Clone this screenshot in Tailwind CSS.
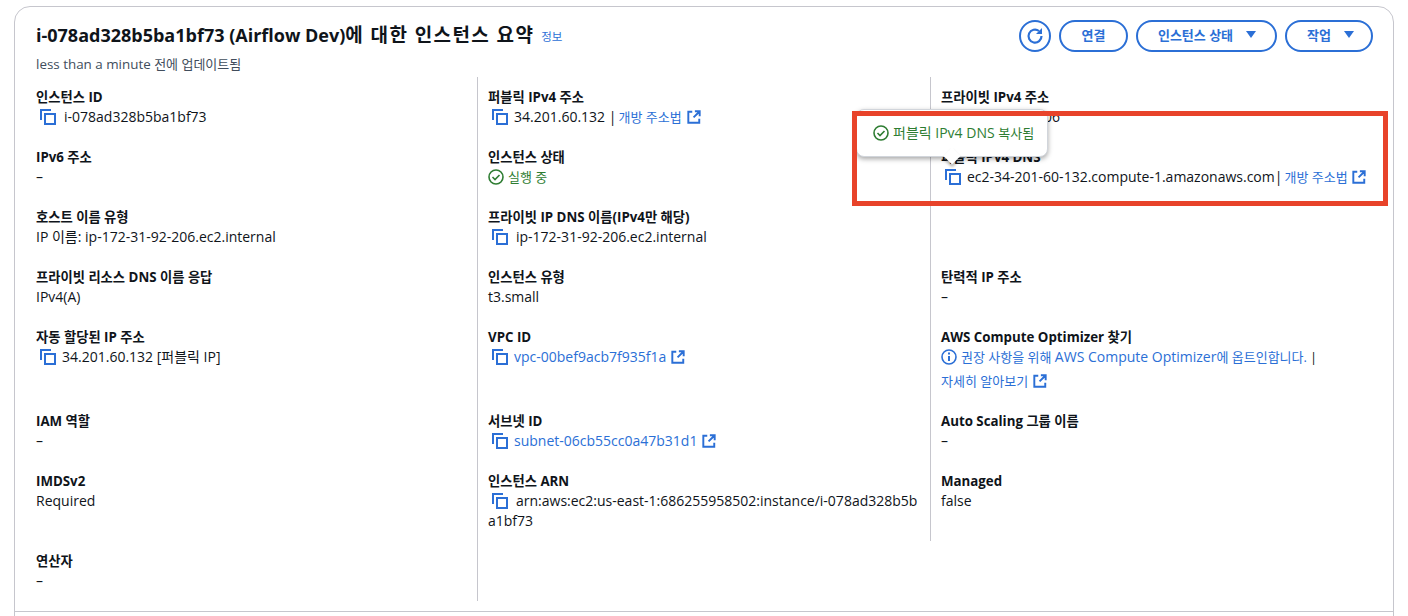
<!doctype html>
<html>
<head>
<meta charset="utf-8">
<script src="https://cdn.jsdelivr.net/npm/@tailwindcss/browser@4"></script>
</head>
<body class="bg-white overflow-hidden font-['Open_Sans','Noto_Sans_CJK_KR',sans-serif] text-[14px] leading-5 text-[#0f141a]">
<svg class="hidden"><defs>
<symbol id="copy" viewBox="0 0 16 16"><path d="M1 11V1h10" fill="none" stroke="currentColor" stroke-width="2"/><rect x="5" y="5" width="10" height="10" fill="none" stroke="currentColor" stroke-width="2"/></symbol>
<symbol id="ext" viewBox="0 0 16 16"><path d="M6 2H1.500v12.500H14V10M9 1.500h5.500V7M14 2L7.500 8.500" fill="none" stroke="currentColor" stroke-width="2.200"/></symbol>
<symbol id="ok" viewBox="0 0 16 16"><circle cx="8" cy="8" r="7" fill="none" stroke="currentColor" stroke-width="1.600"/><path d="M4.500 8l2.500 2.500L11.500 6" fill="none" stroke="currentColor" stroke-width="1.600"/></symbol>
</defs></svg>
<div class="relative h-[616px] pt-[6px] pl-[14px] pr-[14px]">
  <div class="h-[640px] border border-[#c6c6cd] rounded-2xl">
    <div class="flex justify-between pl-[21px] pr-[20px] pt-[13px] h-[70px]">
      <div>
        <div class="flex items-center gap-[7px] h-[30px]">
          <h1 class="text-[18px] leading-[30px] font-bold">i-078ad328b5ba1bf73 (Airflow Dev)<span class="text-[19px] tracking-[1.4px]">에 대한 인스턴스 요약</span></h1>
          <a class="text-[11.500px] text-[#2b6fd6] mt-[3px]">정보</a>
        </div>
        <p class="text-[13.4px] leading-5 mt-[4px] text-[#414d5c]">less than a minute <span class="text-[13px]">전에 업데이트됨</span></p>
      </div>
      <div class="flex gap-2 items-start text-[#2b6fd6] font-bold text-[13px]">
        <button class="size-8 rounded-full border-2 border-[#2b6fd6] flex items-center justify-center"><svg class="size-5" viewBox="0 0 20 20" fill="none" stroke="currentColor" stroke-width="2.200"><path d="M16.500 10a6.500 6.500 0 1 1-2.500-5"/><path d="M17 2v6h-6z" fill="currentColor" stroke="none"/></svg></button>
        <button class="h-8 w-[69px] rounded-full border-2 border-[#2b6fd6] pb-0.5">연결</button>
        <button class="h-8 w-[141px] rounded-full border-2 border-[#2b6fd6] flex items-center justify-center gap-3 pb-0.5 pl-0.5">인스턴스 상태 <svg class="w-3 h-2" viewBox="0 0 12 8"><path d="M1 0h10L6 7z" fill="currentColor"/></svg></button>
        <button class="h-8 w-[88px] rounded-full border-2 border-[#2b6fd6] flex items-center justify-center gap-3 pb-0.5 pl-1">작업 <svg class="w-3 h-2" viewBox="0 0 12 8"><path d="M1 0h10L6 7z" fill="currentColor"/></svg></button>
      </div>
    </div>
    <div class="flex pl-[21px]">
      <div class="w-[441px] pt-[10px] h-[524px] flex flex-col">
        <div class="h-[60px]"><b class="block text-[13.3px]">인스턴스 ID</b><div class="flex items-center pl-1"><svg class="size-4 text-[#2b6fd6] mr-2"><use href="#copy"/></svg>i-078ad328b5ba1bf73</div></div>
        <div class="h-[60px]"><b class="block text-[13.3px]">IPv6 주소</b><div>–</div></div>
        <div class="h-[60px]"><b class="block text-[13.3px]">호스트 이름 유형</b><div>IP 이름: ip-172-31-92-206.ec2.internal</div></div>
        <div class="h-[60px]"><b class="block text-[13.3px]">프라이빗 리소스 DNS 이름 응답</b><div>IPv4(A)</div></div>
        <div class="h-[84px]"><b class="block text-[13.3px]">자동 할당된 IP 주소</b><div class="flex items-center pl-1"><svg class="size-4 text-[#2b6fd6] mr-[6px]"><use href="#copy"/></svg><span>34.201.60.132 [퍼블릭 IP]</span></div></div>
        <div class="h-[60px]"><b class="block text-[13.3px]">IAM 역할</b><div>–</div></div>
        <div class="h-[80px]"><b class="block text-[13.3px]">IMDSv2</b><div>Required</div></div>
        <div class="h-[40px]"><b class="block text-[13.3px]">연산자</b><div>–</div></div>
      </div>
      <div class="w-[453px] h-[524px] border-l border-[#c6c6cd] pl-[10px] pt-[10px] flex flex-col">
        <div class="h-[60px]"><b class="block text-[13.3px]">퍼블릭 IPv4 주소</b><div class="flex items-center pl-1"><svg class="size-4 text-[#2b6fd6] mr-[6px]"><use href="#copy"/></svg>34.201.60.132 |<a class="text-[#2b6fd6] text-[13px] ml-[2px]">개방 주소법</a><svg class="size-[14px] ml-[5px] text-[#2b6fd6]"><use href="#ext"/></svg></div></div>
        <div class="h-[60px]"><b class="block text-[13.3px]">인스턴스 상태</b><div class="flex items-center text-[#2e7d32] text-[13px]"><svg class="size-4 mr-1"><use href="#ok"/></svg>실행 중</div></div>
        <div class="h-[60px]"><b class="block text-[13.3px]">프라이빗 IP DNS 이름(IPv4만 해당)</b><div class="flex items-center pl-1"><svg class="size-4 text-[#2b6fd6] mr-2"><use href="#copy"/></svg>ip-172-31-92-206.ec2.internal</div></div>
        <div class="h-[60px]"><b class="block text-[13.3px]">인스턴스 유형</b><div>t3.small</div></div>
        <div class="h-[84px]"><b class="block text-[13.3px]">VPC ID</b><div class="flex items-center pl-1 text-[#2b6fd6]"><svg class="size-4 mr-[6px]"><use href="#copy"/></svg>vpc-00bef9acb7f935f1a<svg class="size-[14px] ml-[5px]"><use href="#ext"/></svg></div></div>
        <div class="h-[60px]"><b class="block text-[13.3px]">서브넷 ID</b><div class="flex items-center pl-1 text-[#2b6fd6]"><svg class="size-4 mr-[6px]"><use href="#copy"/></svg>subnet-06cb55cc0a47b31d1<svg class="size-[14px] ml-[5px]"><use href="#ext"/></svg></div></div>
        <div class="h-[60px] w-[431px]"><b class="block text-[13.3px]">인스턴스 ARN</b><div class="break-all"><svg class="inline-block size-4 text-[#2b6fd6] ml-1 mr-[8px] align-[-3px]"><use href="#copy"/></svg>arn:aws:ec2:us-east-1:686255958502:instance/i-078ad328b5ba1bf73</div></div>
      </div>
      <div class="w-[453px] h-[464px] border-l border-[#c6c6cd] pl-[10px] pt-[10px] flex flex-col">
        <div class="h-[60px]"><b class="block text-[13.3px]">프라이빗 IPv4 주소</b><div class="flex items-center pl-1"><svg class="size-4 text-[#2b6fd6] mr-2"><use href="#copy"/></svg>172.31.92.206</div></div>
        <div class="h-[60px]"><b class="block text-[13.3px]">퍼블릭 IPv4 DNS</b><div class="flex items-center pl-1 whitespace-nowrap"><svg class="size-4 text-[#2b6fd6] mr-[6px]"><use href="#copy"/></svg>ec2-34-201-60-132.compute-1.amazonaws.com|<a class="text-[#2b6fd6] text-[13px] ml-[2px]">개방 주소법</a><svg class="size-[14px] ml-[4px] text-[#2b6fd6]"><use href="#ext"/></svg></div></div>
        <div class="h-[60px]"></div>
        <div class="h-[60px]"><b class="block text-[13.3px]">탄력적 IP 주소</b><div>–</div></div>
        <div class="h-[84px]"><b class="block text-[13.3px]">AWS Compute Optimizer 찾기</b><div class="flex items-center text-[#2b6fd6] text-[13px]"><svg class="size-4 mr-1" viewBox="0 0 16 16"><circle cx="8" cy="8" r="7" fill="none" stroke="currentColor" stroke-width="1.600"/><path d="M8 7v5M8 3.500v2" stroke="currentColor" stroke-width="2" fill="none"/></svg><span>권장 사항을 위해 <span class="text-[14px]">AWS Compute Optimizer</span>에 옵트인합니다.</span><span class="text-[#0f141a] ml-[3px]">|</span></div><div class="flex items-center text-[#2b6fd6] text-[13px] mt-1">자세히 알아보기<svg class="size-[14px] ml-[5px]"><use href="#ext"/></svg></div></div>
        <div class="h-[60px]"><b class="block text-[13.3px]">Auto Scaling 그룹 이름</b><div>–</div></div>
        <div class="h-[60px]"><b class="block text-[13.3px]">Managed</b><div>false</div></div>
      </div>
    </div>
    <div class="border-t border-[#c6c6cd] mt-[10px]"></div>
  </div>
  <div class="absolute left-[856px] top-[109px] w-[192px] h-[48px] bg-white rounded-lg border border-[#d1d5db] shadow-[0_2px_5px_rgba(0,0,0,0.35)] flex items-center pl-4 text-[#2e7d32] whitespace-nowrap"><svg class="size-4 mr-1"><use href="#ok"/></svg><span>퍼블릭 IPv4 DNS <span class="text-[13px]">복사됨</span></span></div>
  <div class="absolute left-[946px] top-[150px] size-3 rotate-45 bg-white shadow-[2px_2px_3px_rgba(0,0,0,0.3)]"></div>
  <div class="absolute left-[852px] top-[111px] w-[536px] h-[95px] border-[5px] border-[#e8432a]"></div>
</div>
</body>
</html>
